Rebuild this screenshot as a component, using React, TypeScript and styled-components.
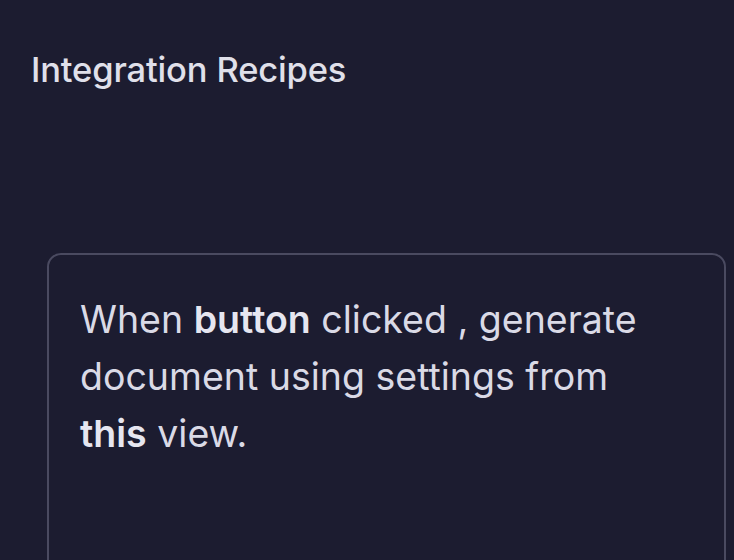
import React from 'react';
import styled, { createGlobalStyle } from 'styled-components';

const GlobalStyle = createGlobalStyle`
  html, body {
    margin: 0;
    padding: 0;
    background: #1c1c30;
  }
  body {
    font-family: Inter, 'Noto Sans', sans-serif;
    color: #e2e2ec;
  }
`;

const Page = styled.div`
  width: 734px;
  height: 560px;
  overflow: hidden;
  background: #1c1c30;
  padding: 48px 0 0 31px;
  box-sizing: border-box;
`;

const Title = styled.h1`
  margin: 0;
  font-size: 34.5px;
  font-weight: 500;
  letter-spacing: -0.15px;
  color: #e0e0ea;
  line-height: 44px;
`;

const Card = styled.div`
  margin: 161px 0 0 16px;
  width: 679px;
  height: 400px;
  box-sizing: border-box;
  border: 2px solid #4a4a60;
  border-radius: 14px;
  padding: 36px 60px 36px 31px;
`;

const Recipe = styled.p`
  margin: 0;
  font-size: 37.5px;
  line-height: 57px;
  font-weight: 400;
  letter-spacing: 0;
  color: #dadae6;
`;

const Strong = styled.b`
  font-weight: 600;
  color: #e6e6f0;
`;

export default function App() {
  return (
    <Page>
      <GlobalStyle />
      <Title>Integration Recipes</Title>
      <Card>
        <Recipe>
          When <Strong>button</Strong> clicked , generate document using
          settings from <Strong>this</Strong> view.
        </Recipe>
      </Card>
    </Page>
  );
}
